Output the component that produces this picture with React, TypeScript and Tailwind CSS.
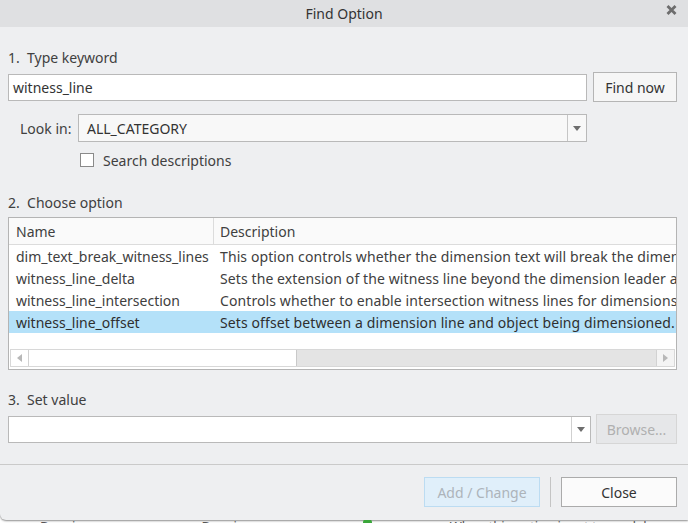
import React from 'react';

const rows = [
  {
    name: 'dim_text_break_witness_lines',
    desc: 'This option controls whether the dimension text will break the dimension witness lines.',
  },
  {
    name: 'witness_line_delta',
    desc: 'Sets the extension of the witness line beyond the dimension leader arrows.',
  },
  {
    name: 'witness_line_intersection',
    desc: 'Controls whether to enable intersection witness lines for dimensions to curves.',
  },
  {
    name: 'witness_line_offset',
    desc: 'Sets offset between a dimension line and object being dimensioned.',
    selected: true,
  },
];

const DropArrow = () => (
  <svg width="8" height="5" viewBox="0 0 8 5">
    <path d="M0 0H8L4 5Z" fill="#6e6e6e" />
  </svg>
);

const ScrollArrow = ({ dir }: { dir: 'left' | 'right' }) => (
  <svg width="5" height="8" viewBox="0 0 5 8">
    {dir === 'left' ? <path d="M5 0V8L0 4Z" fill="#b8b8b8" /> : <path d="M0 0V8L5 4Z" fill="#b8b8b8" />}
  </svg>
);

export default function App() {
  return (
    <div className="w-[688px] h-[523px] bg-white overflow-hidden font-['Noto_Sans',sans-serif] text-[14px] text-[#404040]">
      <div className="h-[520px] flex flex-col bg-[#eeeff1] rounded-bl-[6px] shadow-[0_1px_2px_rgba(0,0,0,0.45)]">
        {/* title bar */}
        <div className="relative h-[27px] shrink-0 flex items-center justify-center bg-[#dfe0e2] text-[#333]">
          <span>Find Option</span>
          <svg className="absolute right-[11px] top-[5px]" width="11" height="10" viewBox="0 0 11 10">
            <path d="M1.5 1L9.5 9M9.5 1L1.5 9" stroke="#6d6d6d" strokeWidth="2.8" />
          </svg>
        </div>

        <div className="px-[8px] flex flex-col">
          <div className="mt-[21px] h-[20px] leading-[20px]">1.&nbsp; Type keyword</div>

          <div className="mt-[4px] flex items-center">
            <div className="w-[579px] h-[27px] bg-white border border-[#b9b9b9] flex items-center px-[4px] text-[#333]">
              witness_line
            </div>
            <button className="ml-[6px] w-[84px] h-[30px] bg-[#f6f6f6] border border-[#b5b5b5] text-[#333]">
              Find now
            </button>
          </div>

          <div className="mt-[12px] flex items-center pl-[12px]">
            <span className="w-[58px]">Look in:</span>
            <div className="w-[509px] h-[28px] bg-[#f8f8f8] border border-[#b9b9b9] flex">
              <div className="flex-1 flex items-center px-[8px] text-[#333]">ALL_CATEGORY</div>
              <div className="w-[19px] border-l border-[#c6c6c6] flex items-center justify-center">
                <DropArrow />
              </div>
            </div>
          </div>

          <div className="mt-[11px] flex items-center pl-[72px] h-[14px]">
            <div className="w-[14px] h-[14px] bg-white border border-[#8a8a8a]" />
            <span className="ml-[9px]">Search descriptions</span>
          </div>

          <div className="mt-[26px] h-[20px] leading-[20px]">2.&nbsp; Choose option</div>

          {/* option table */}
          <div className="mt-[4px] w-[669px] h-[153px] border border-[#b4b4b4] bg-white flex flex-col">
            <div className="h-[27px] shrink-0 flex border-b border-[#dcdcdc] bg-[#fafafa]">
              <div className="w-[205px] pl-[7px] flex items-center border-r border-[#dcdcdc]">Name</div>
              <div className="flex-1 pl-[6px] flex items-center">Description</div>
            </div>
            <div className="flex-1 flex flex-col overflow-hidden">
              {rows.map((r) => (
                <div
                  key={r.name}
                  className={`h-[22px] shrink-0 flex items-center whitespace-nowrap ${
                    r.selected ? 'bg-[#b4e1f9] text-[#2f2f2f]' : ''
                  }`}
                >
                  <div className="w-[205px] shrink-0 pl-[7px]">{r.name}</div>
                  <div className="pl-[6px] tracking-[0.1px]">{r.desc}</div>
                </div>
              ))}
            </div>
            <div className="h-[20px] shrink-0 px-[1px] pb-[2px] flex">
              <div className="flex-1 flex bg-[#e4e4e4] border border-[#d8d8d8]">
                <div className="w-[18px] bg-white border-r border-[#d2d2d2] flex items-center justify-center">
                  <ScrollArrow dir="left" />
                </div>
                <div className="w-[268px] bg-white border-r border-[#c9c9c9]" />
                <div className="flex-1" />
                <div className="w-[18px] bg-[#f4f4f4] border-l border-[#d2d2d2] flex items-center justify-center">
                  <ScrollArrow dir="right" />
                </div>
              </div>
            </div>
          </div>

          <div className="mt-[20px] h-[20px] leading-[20px]">3.&nbsp; Set value</div>

          <div className="mt-[4px] flex items-center">
            <div className="w-[583px] h-[27px] bg-white border border-[#b9b9b9] flex">
              <div className="flex-1" />
              <div className="w-[19px] border-l border-[#d0d0d0] flex items-center justify-center">
                <DropArrow />
              </div>
            </div>
            <button className="ml-[5px] w-[81px] h-[30px] bg-[#e6e7e9] border border-[#d6d6d6] text-[#b0b0b0]">
              Browse...
            </button>
          </div>
        </div>

        <div className="mt-[20px] h-px bg-[#cacaca]" />

        <div className="mt-[12px] flex items-center justify-end pr-[11px]">
          <button className="w-[116px] h-[30px] bg-[#e0effa] border border-[#bcdcf2] text-[#adb4ba]">
            Add / Change
          </button>
          <div className="mx-[10px] w-px h-[30px] bg-[#c4c4c4]" />
          <button className="w-[116px] h-[30px] bg-[#fbfbfb] border border-[#ababab] text-[#333]">
            Close
          </button>
        </div>
      </div>

      {/* window behind the dialog */}
      <div className="h-[3px] overflow-hidden flex text-[13px] leading-[13px] text-[#555]">
        <span className="ml-[40px]">Drawing</span>
        <span className="ml-[110px]">Drawing</span>
        <span className="ml-[110px] mt-[-2px] w-[10px] h-[10px] rounded-full bg-[#3aa63a]" />
        <span className="ml-[78px]">When this option is set to model, dimensions</span>
      </div>
    </div>
  );
}
